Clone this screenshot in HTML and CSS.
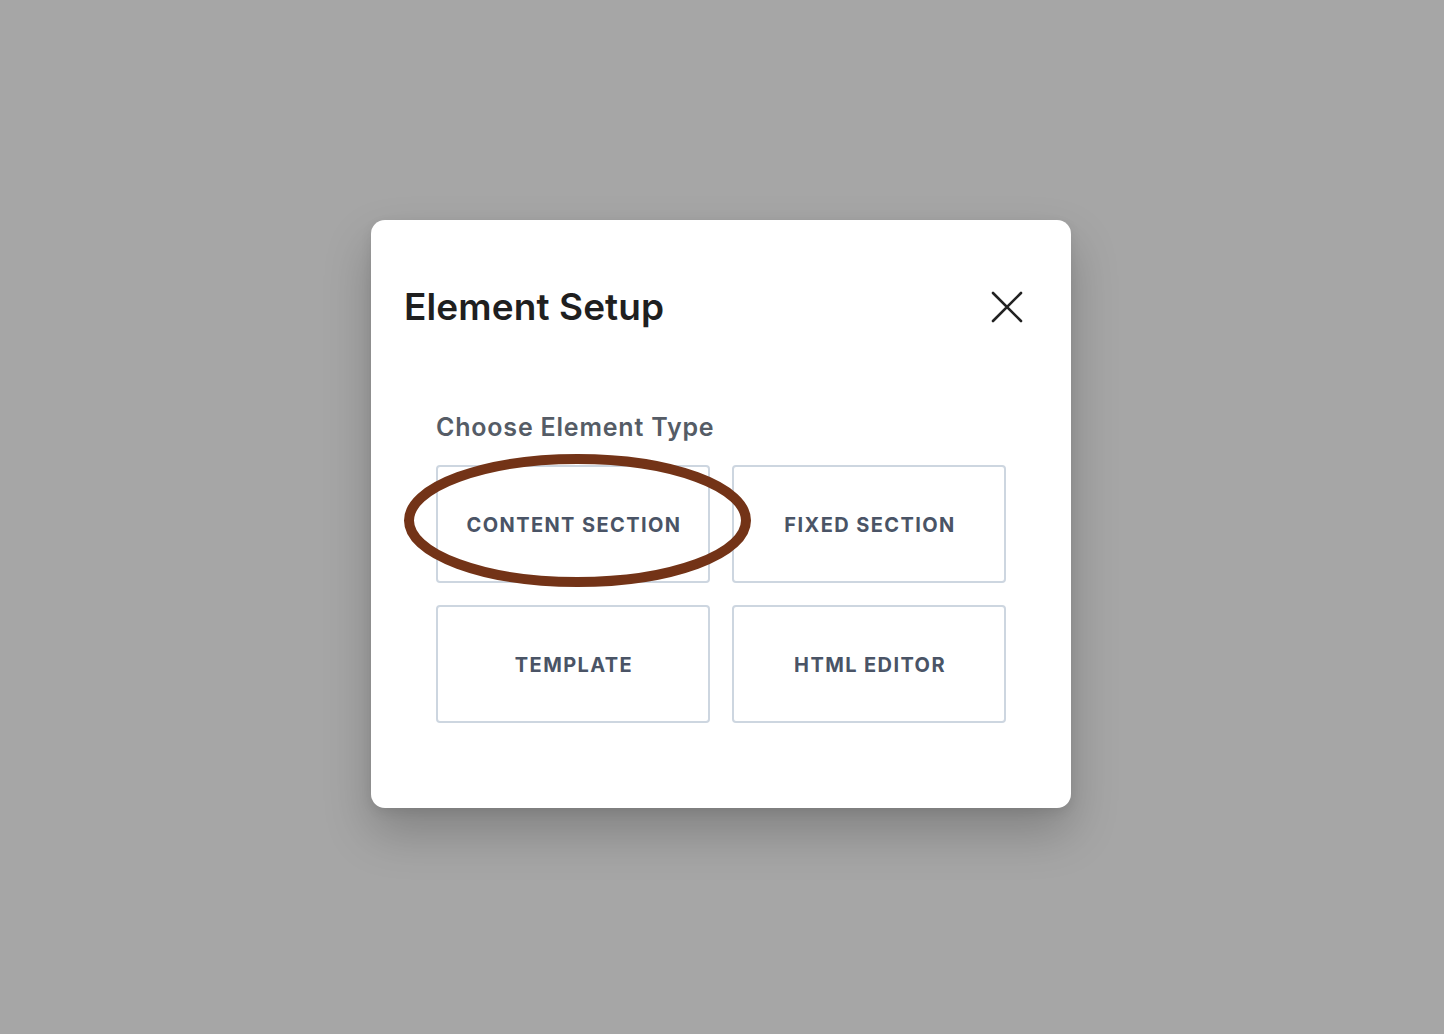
FILE: index.html
```html
<!DOCTYPE html>
<html>
<head>
<meta charset="utf-8">
<link rel="stylesheet" href="styles.css">
</head>
<body>
<div class="modal">
  <div class="header">
    <h1 class="title">Element Setup</h1>
    <button class="close" aria-label="Close">
      <svg width="32" height="32" viewBox="0 0 32 32"><path d="M2 2 L30 30 M30 2 L2 30" stroke="#222" stroke-width="2.6" stroke-linecap="round" fill="none"/></svg>
    </button>
  </div>
  <div class="body">
    <h2 class="subtitle">Choose Element Type</h2>
    <div class="grid">
      <button class="opt">CONTENT SECTION</button>
      <button class="opt">FIXED SECTION</button>
      <button class="opt">TEMPLATE</button>
      <button class="opt">HTML EDITOR</button>
    </div>
  </div>
  <svg class="mark" width="352" height="140" viewBox="0 0 352 140"><ellipse cx="175.5" cy="70.5" rx="168.5" ry="61.5" fill="none" stroke="#733317" stroke-width="10"/></svg>
</div>
</body>
</html>
```
FILE: styles.css
```css
html, body { margin: 0; padding: 0; }
body {
  background: #a6a6a6;
  width: 1444px;
  height: 1034px;
  overflow: hidden;
  font-family: Inter, "Noto Sans", sans-serif;
}
.modal {
  position: relative;
  box-sizing: border-box;
  width: 700px;
  height: 588px;
  margin: 220px 0 0 371px;
  background: #fff;
  border-radius: 14px;
  box-shadow: 0 24px 48px rgba(0,0,0,0.22), 0 4px 12px rgba(0,0,0,0.08);
}
.header {
  display: flex;
  justify-content: space-between;
  align-items: center;
  padding: 66px 48px 0 33px;
  height: 42px;
}
.title {
  margin: 0;
  font-size: 37px;
  line-height: 42px;
  font-weight: 600;
  color: #1f1f1f;
  letter-spacing: 0.1px;
}
.close {
  border: 0;
  background: none;
  padding: 0;
  width: 32px;
  height: 32px;
  display: flex;
}
.body {
  padding: 84px 65px 0 65px;
}
.subtitle {
  margin: 0 0 23px 0;
  font-size: 25px;
  line-height: 30px;
  font-weight: 600;
  color: #555c66;
  letter-spacing: 0.8px;
}
.grid {
  display: grid;
  grid-template-columns: 274px 274px;
  grid-auto-rows: 118px;
  gap: 22px;
}
.opt {
  box-sizing: border-box;
  border: 2px solid #cdd6e0;
  border-radius: 4px;
  background: #fff;
  font-family: Inter, "Noto Sans", sans-serif;
  font-size: 20px;
  font-weight: 700;
  letter-spacing: 1.4px;
  color: #4a5466;
  padding: 2px 0 0 2px;
}
.mark {
  position: absolute;
  left: 31px;
  top: 230px;
  pointer-events: none;
}
```
